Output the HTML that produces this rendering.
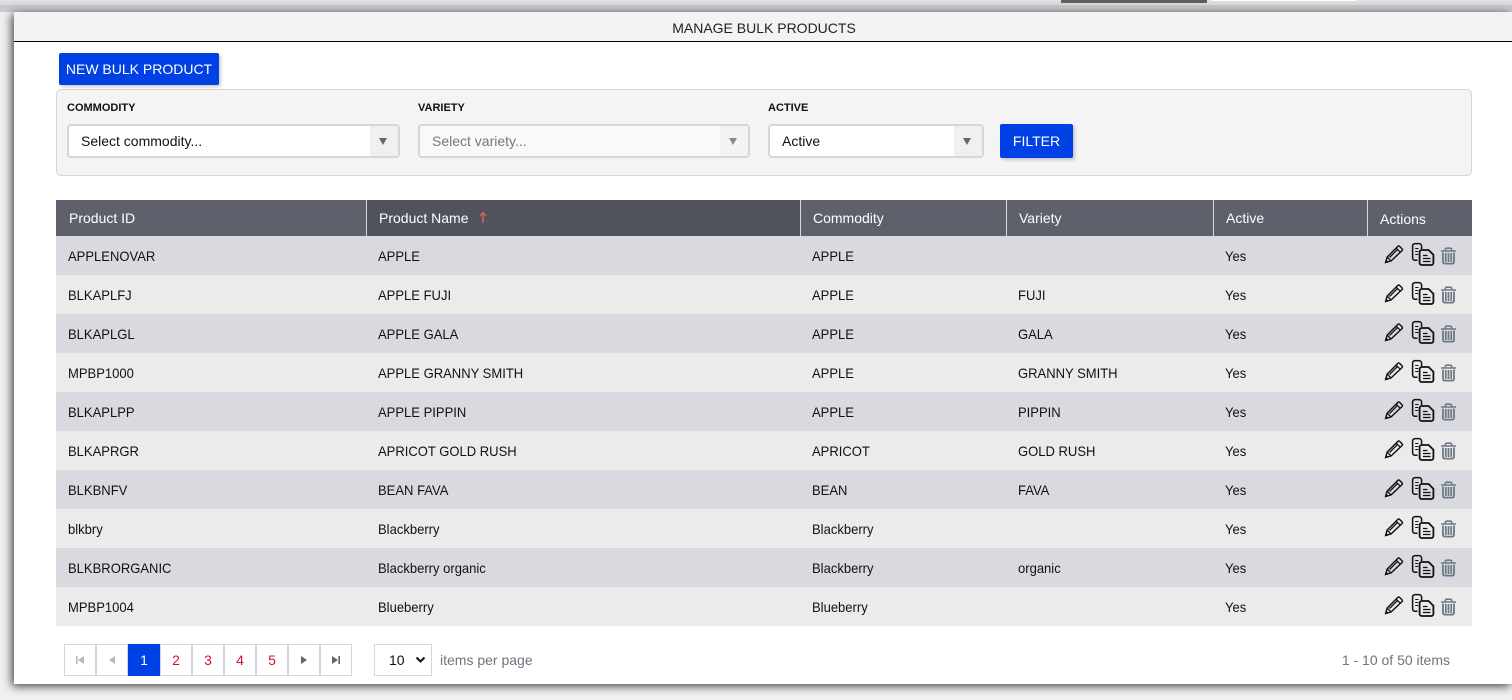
<!DOCTYPE html>
<html>
<head>
<meta charset="utf-8">
<style>
html,body{margin:0;padding:0}
body{width:1512px;height:700px;position:relative;overflow:hidden;background:#f1f0f0;font-family:"Liberation Sans",sans-serif;font-size:14px;color:#111}
.a{position:absolute;white-space:nowrap}
#top{left:0;top:0;width:1512px;height:12px;background:linear-gradient(#dfe1e7 0,#d6d7dc 5px,#bfbfc3 6px,#cbcbcd 7px,#cbcbcd 12px)}
#modal{left:14px;top:12px;width:1498px;height:672px;background:#fff;box-shadow:-2px 2px 9px rgba(0,0,0,.75)}
#hd{left:14px;top:12px;width:1500px;height:29px;background:#f4f2f3;border-bottom:1px solid #000;text-align:center;line-height:32px;color:#222}
.btn{background:#0041e6;color:#fff;border-radius:2px;text-align:center;box-shadow:2px 2px 3px rgba(0,0,0,.2)}
#panel{left:56px;top:89px;width:1414px;height:85px;background:#f4f4f4;border:1px solid #d6d6d6;border-radius:5px}
.lb{font-size:11px;font-weight:bold;color:#111;top:102px;line-height:13px}
.sel{top:124px;height:30px;background:#fff;border:2px solid #d3d6db;border-radius:4px;line-height:30px;overflow:hidden}
.sel span{position:absolute;left:12px;top:0}
.sel i{position:absolute;right:0;top:0;width:28px;height:30px;background:#f0f0f0}
.sel i:after{content:"";position:absolute;left:9px;top:12px;border-left:4.5px solid transparent;border-right:4.5px solid transparent;border-top:7px solid #666}
.row{left:56px;width:1416px;height:39px}
.th{top:200px;height:36px;line-height:36px;background:#5e616b;color:#fff;box-sizing:border-box;padding-left:13px}
.c{line-height:41px;color:#111;transform:scaleX(.93);transform-origin:0 50%}
.pg{top:644px;width:30px;height:30px;border:1px solid #d5d8dc;background:#fff;text-align:center;line-height:30px;color:#d8102f}
.pg svg{position:absolute;left:0;top:0}
.i{width:84px;height:30px;left:1380px}
</style>
</head>
<body>
<div class="a" id="top"></div>
<div class="a" style="left:1061px;top:0;width:146px;height:3px;background:#5f5f5f"></div>
<div class="a" style="left:1211px;top:0;width:146px;height:1px;background:#fff"></div>
<div class="a" id="modal"></div>
<div class="a" id="hd">MANAGE BULK PRODUCTS</div>

<div class="a btn" style="left:59px;top:53px;width:160px;height:32px;line-height:32px">NEW BULK PRODUCT</div>
<div class="a" id="panel"></div>
<div class="a lb" style="left:67px">COMMODITY</div>
<div class="a lb" style="left:418px">VARIETY</div>
<div class="a lb" style="left:768px">ACTIVE</div>
<div class="a sel" style="left:67px;width:329px"><span>Select commodity...</span><i></i></div>
<div class="a sel" style="left:418px;width:328px;background:#f9f9f9;color:#777"><span>Select variety...</span><i style="opacity:.75"></i></div>
<div class="a sel" style="left:768px;width:212px"><span>Active</span><i></i></div>
<div class="a btn" style="left:1000px;top:124px;width:73px;height:34px;line-height:34px">FILTER</div>

<div class="a" style="left:56px;top:200px;width:1416px;height:36px;background:#d8d9dd"></div>
<div class="a th" style="left:56px;width:310px">Product ID</div>
<div class="a th" style="left:367px;width:433px;background:#50535b;padding-left:12px">Product Name<svg width="10" height="14" viewBox="0 0 10 14" style="position:absolute;left:111px;top:11px"><path d="M5 1.5V12M2.2 5L5 1.5 7.8 5" fill="none" stroke="#f0605a" stroke-width="1.3"/></svg></div>
<div class="a th" style="left:801px;width:205px;padding-left:12px">Commodity</div>
<div class="a th" style="left:1007px;width:206px;padding-left:12px">Variety</div>
<div class="a th" style="left:1214px;width:153px;padding-left:12px">Active</div>
<div class="a th" style="left:1368px;width:104px;padding-left:12px;line-height:38px">Actions</div>

<svg width="0" height="0" style="position:absolute">
<defs>
<g id="ic">
<path d="M5.6 22.500l1.500-5.400L17.800 6.400q.9-.9 1.800 0l2.400 2.400q.9.9 0 1.800L11 21z" fill="none" stroke="#111" stroke-width="1.400" stroke-linejoin="round"/>
<path d="M7.100 17.100l3.900 3.900M9.500 17.500l8.500-8.500M16 8l4.200 4.200M5.600 22.500l2-.6-1.400-1.400z" fill="none" stroke="#111" stroke-width="1.300"/>
<path d="M37.500 20.300H35a2.400 2.400 0 0 1-2.400-2.400V6a2.400 2.400 0 0 1 2.400-2.400h4a2.600 2.600 0 0 1 2.600 2.600V9" fill="none" stroke="#111" stroke-width="1.500"/>
<path d="M35.200 8.500h3.300M35.200 11.500h3M35.200 14.500h3" stroke="#111" stroke-width="1.100"/>
<path d="M39.600 12a2 2 0 0 1 2-2h7l4.800 4.800V23a2 2 0 0 1-2 2H41.600a2 2 0 0 1-2-2z" fill="none" stroke="#111" stroke-width="1.800"/>
<path d="M43 15.500h4.500M43 18.500h7.500M43 21.500h7.500" stroke="#111" stroke-width="1.300"/>
<path d="M61 11h15M65.300 10.500V9.600a1.400 1.400 0 0 1 1.400-1.400h3.600a1.400 1.400 0 0 1 1.400 1.400v.9" fill="none" stroke="#6c7884" stroke-width="1.600"/>
<path d="M63 12.500v9.300a1.800 1.800 0 0 0 1.800 1.800h7.400a1.800 1.800 0 0 0 1.800-1.800v-9.300" fill="none" stroke="#6c7884" stroke-width="1.800"/>
<path d="M65.800 13v9M68.500 13v9M71.200 13v9" stroke="#6c7884" stroke-width="1.700"/>
</g>
</defs>
</svg>

<div class="a row" style="top:236px;background:#d9dadf"></div>
<div class="a c" style="left:68px;top:236px">APPLENOVAR</div><div class="a c" style="left:378px;top:236px">APPLE</div><div class="a c" style="left:812px;top:236px">APPLE</div><div class="a c" style="left:1225px;top:236px">Yes</div>
<svg class="a i" style="top:240px"><use href="#ic"/></svg>

<div class="a row" style="top:275px;background:#ebebeb"></div>
<div class="a c" style="left:68px;top:275px">BLKAPLFJ</div><div class="a c" style="left:378px;top:275px">APPLE FUJI</div><div class="a c" style="left:812px;top:275px">APPLE</div><div class="a c" style="left:1018px;top:275px">FUJI</div><div class="a c" style="left:1225px;top:275px">Yes</div>
<svg class="a i" style="top:279px"><use href="#ic"/></svg>

<div class="a row" style="top:314px;background:#d9dadf"></div>
<div class="a c" style="left:68px;top:314px">BLKAPLGL</div><div class="a c" style="left:378px;top:314px">APPLE GALA</div><div class="a c" style="left:812px;top:314px">APPLE</div><div class="a c" style="left:1018px;top:314px">GALA</div><div class="a c" style="left:1225px;top:314px">Yes</div>
<svg class="a i" style="top:318px"><use href="#ic"/></svg>

<div class="a row" style="top:353px;background:#ebebeb"></div>
<div class="a c" style="left:68px;top:353px">MPBP1000</div><div class="a c" style="left:378px;top:353px">APPLE GRANNY SMITH</div><div class="a c" style="left:812px;top:353px">APPLE</div><div class="a c" style="left:1018px;top:353px">GRANNY SMITH</div><div class="a c" style="left:1225px;top:353px">Yes</div>
<svg class="a i" style="top:357px"><use href="#ic"/></svg>

<div class="a row" style="top:392px;background:#d9dadf"></div>
<div class="a c" style="left:68px;top:392px">BLKAPLPP</div><div class="a c" style="left:378px;top:392px">APPLE PIPPIN</div><div class="a c" style="left:812px;top:392px">APPLE</div><div class="a c" style="left:1018px;top:392px">PIPPIN</div><div class="a c" style="left:1225px;top:392px">Yes</div>
<svg class="a i" style="top:396px"><use href="#ic"/></svg>

<div class="a row" style="top:431px;background:#ebebeb"></div>
<div class="a c" style="left:68px;top:431px">BLKAPRGR</div><div class="a c" style="left:378px;top:431px">APRICOT GOLD RUSH</div><div class="a c" style="left:812px;top:431px">APRICOT</div><div class="a c" style="left:1018px;top:431px">GOLD RUSH</div><div class="a c" style="left:1225px;top:431px">Yes</div>
<svg class="a i" style="top:435px"><use href="#ic"/></svg>

<div class="a row" style="top:470px;background:#d9dadf"></div>
<div class="a c" style="left:68px;top:470px">BLKBNFV</div><div class="a c" style="left:378px;top:470px">BEAN FAVA</div><div class="a c" style="left:812px;top:470px">BEAN</div><div class="a c" style="left:1018px;top:470px">FAVA</div><div class="a c" style="left:1225px;top:470px">Yes</div>
<svg class="a i" style="top:474px"><use href="#ic"/></svg>

<div class="a row" style="top:509px;background:#ebebeb"></div>
<div class="a c" style="left:68px;top:509px">blkbry</div><div class="a c" style="left:378px;top:509px">Blackberry</div><div class="a c" style="left:812px;top:509px">Blackberry</div><div class="a c" style="left:1225px;top:509px">Yes</div>
<svg class="a i" style="top:513px"><use href="#ic"/></svg>

<div class="a row" style="top:548px;background:#d9dadf"></div>
<div class="a c" style="left:68px;top:548px">BLKBRORGANIC</div><div class="a c" style="left:378px;top:548px">Blackberry organic</div><div class="a c" style="left:812px;top:548px">Blackberry</div><div class="a c" style="left:1018px;top:548px">organic</div><div class="a c" style="left:1225px;top:548px">Yes</div>
<svg class="a i" style="top:552px"><use href="#ic"/></svg>

<div class="a row" style="top:587px;background:#ebebeb"></div>
<div class="a c" style="left:68px;top:587px">MPBP1004</div><div class="a c" style="left:378px;top:587px">Blueberry</div><div class="a c" style="left:812px;top:587px">Blueberry</div><div class="a c" style="left:1225px;top:587px">Yes</div>
<svg class="a i" style="top:591px"><use href="#ic"/></svg>

<div class="a pg" style="left:64px"><svg width="30" height="30"><path d="M11 11h1.600v8H11zM19 11v8l-6-4z" fill="#b5b8bc"/></svg></div>
<div class="a pg" style="left:96px"><svg width="30" height="30"><path d="M18 11v8l-6-4z" fill="#b5b8bc"/></svg></div>
<div class="a pg" style="left:128px;width:32px;height:32px;border:0;background:#0041e6;color:#fff;line-height:32px">1</div>
<div class="a pg" style="left:160px">2</div>
<div class="a pg" style="left:192px">3</div>
<div class="a pg" style="left:224px">4</div>
<div class="a pg" style="left:256px">5</div>
<div class="a pg" style="left:288px"><svg width="30" height="30"><path d="M12 11v8l6-4z" fill="#5f6670"/></svg></div>
<div class="a pg" style="left:320px"><svg width="30" height="30"><path d="M11 11v8l6-4zM17.400 11H19v8h-1.600z" fill="#5f6670"/></svg></div>

<div class="a" style="left:374px;top:644px;width:56px;height:30px;border:1px solid #d5d8dc;background:#fff;line-height:30px"><span class="a" style="left:14px;top:0">10</span><svg class="a" style="left:40px;top:11px" width="11" height="8"><path d="M1.500 1.500L5.500 5.500 9.500 1.500" fill="none" stroke="#111" stroke-width="2"/></svg></div>
<div class="a" style="left:440px;top:644px;line-height:32px;color:#6c757d">items per page</div>
<div class="a" style="right:62px;top:644px;line-height:32px;color:#6c757d">1 - 10 of 50 items</div>
</body>
</html>
